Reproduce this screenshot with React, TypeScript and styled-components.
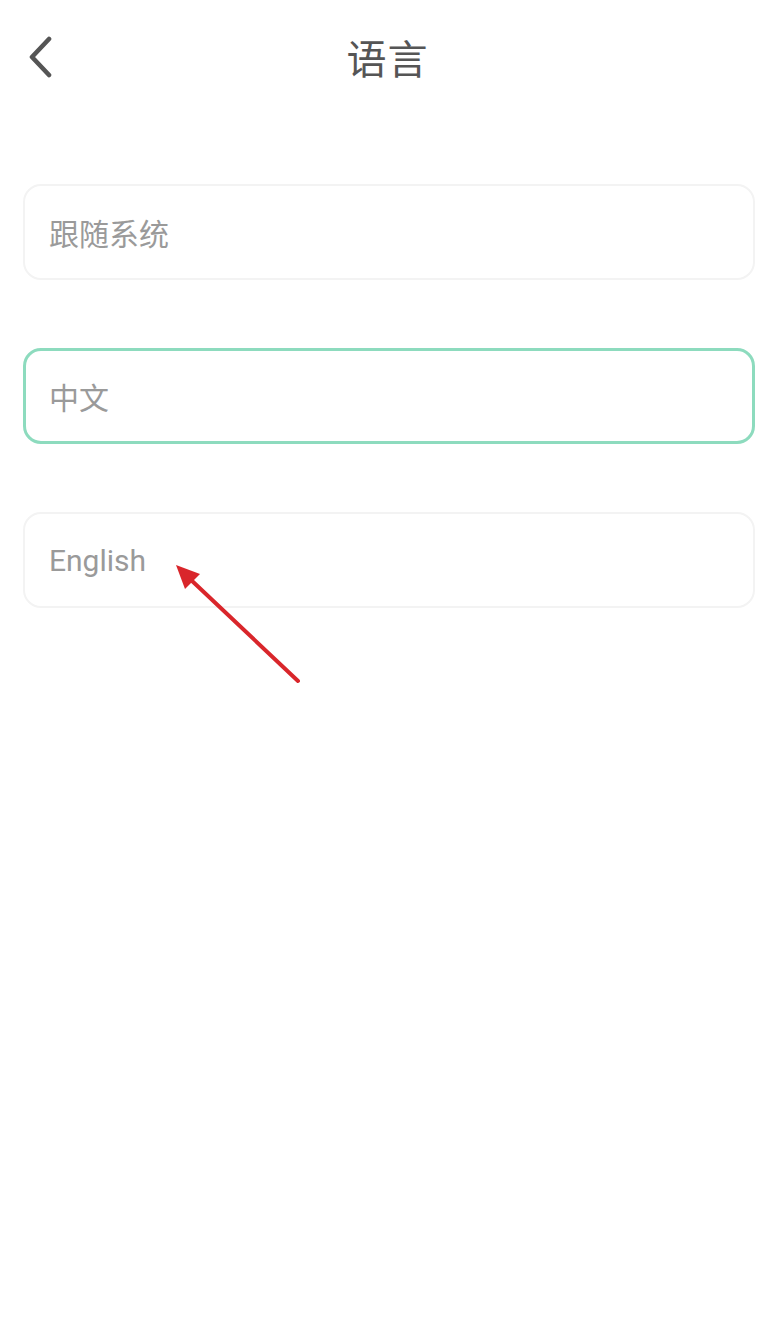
import React from "react";
import styled, { createGlobalStyle } from "styled-components";

const Global = createGlobalStyle`
  html, body { margin: 0; padding: 0; background: #ffffff; }
  body { font-family: Roboto, "Noto Sans CJK SC", sans-serif; }
`;

const Page = styled.div`
  position: relative;
  width: 775px;
  min-height: 1318px;
  background: #ffffff;
`;

const Header = styled.header`
  display: grid;
  grid-template-columns: 1fr auto 1fr;
  align-items: center;
  height: 114px;
`;

const BackButton = styled.button`
  justify-self: start;
  display: flex;
  align-items: center;
  margin-left: 27px;
  padding: 0;
  border: none;
  background: transparent;
  width: 26px;
  height: 42px;
`;

const Title = styled.h1`
  margin: 0;
  font-family: "Noto Sans CJK SC", sans-serif;
  font-weight: 400;
  font-size: 40px;
  color: #555555;
  letter-spacing: 1px;
`;

const List = styled.div`
  display: flex;
  flex-direction: column;
  gap: 68px;
  padding: 70px 20px 0 23px;
`;

const Option = styled.div<{ $selected?: boolean }>`
  box-sizing: border-box;
  height: 96px;
  display: flex;
  align-items: center;
  padding-left: ${(p) => (p.$selected ? "23px" : "24px")};
  border-radius: 18px;
  border: ${(p) => (p.$selected ? "3px solid #8ddbbe" : "2px solid #f3f3f3")};
  font-size: 30px;
  color: #9a9a9a;
  font-family: Roboto, "Noto Sans CJK SC", sans-serif;
`;

const Annotation = styled.svg`
  position: absolute;
  left: 0;
  top: 0;
  pointer-events: none;
`;

export default function App() {
  return (
    <Page>
      <Global />
      <Header>
        <BackButton aria-label="back">
          <svg width="26" height="42" viewBox="0 0 26 42">
            <path
              d="M22 3 L5 21 L22 39"
              fill="none"
              stroke="#555555"
              strokeWidth="4.6"
              strokeLinecap="round"
              strokeLinejoin="round"
            />
          </svg>
        </BackButton>
        <Title>语言</Title>
        <div />
      </Header>
      <List>
        <Option>跟随系统</Option>
        <Option $selected>中文</Option>
        <Option>English</Option>
      </List>
      <Annotation width="775" height="1318" viewBox="0 0 775 1318">
        <line x1="298" y1="681" x2="190" y2="579" stroke="#d9262b" strokeWidth="4" strokeLinecap="round" />
        <polygon points="176,565 200,574 185,589" fill="#d9262b" />
      </Annotation>
    </Page>
  );
}
